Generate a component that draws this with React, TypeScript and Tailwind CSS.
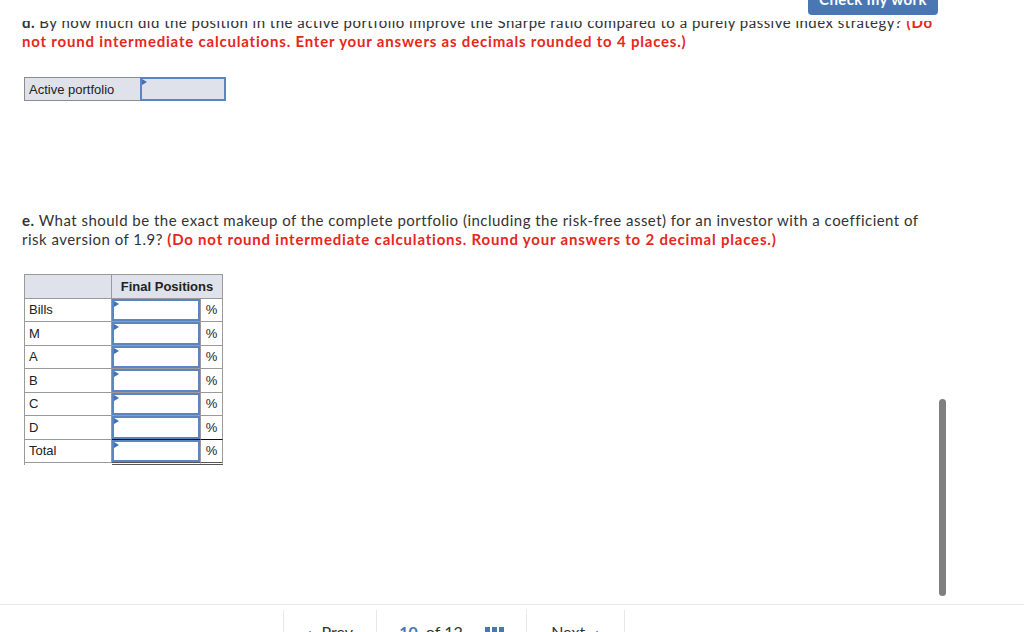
import React from 'react';

const rows = ['Bills', 'M', 'A', 'B', 'C', 'D', 'Total'];

function Flag() {
  return (
    <span className="absolute left-0 top-0 h-0 w-0 border-y-[3px] border-l-[5px] border-y-transparent border-l-[#3f72b5]" />
  );
}

export default function App() {
  return (
    <div className="relative flex h-[632px] w-[1024px] flex-col overflow-hidden bg-white font-['Lato',sans-serif] text-[#333]">
      {/* ── sticky top bar ── */}
      <div className="flex h-[21px] shrink-0 justify-end pr-[86px]">
        <button className="-mt-[17px] flex h-[32px] w-[130px] items-center justify-center rounded-b-[4px] bg-[#4a77b4] text-[15px] font-bold leading-none tracking-[0.4px] text-white">
          Check my work
        </button>
      </div>

      {/* ── question pane ── */}
      <div className="relative flex-1 overflow-hidden">
        <div className="-mt-[8px] pl-[22px] text-[15px] leading-[19px] tracking-[0.48px]">
          <p className="whitespace-nowrap">
            <b>d.</b> By how much did the position in the active portfolio improve the Sharpe ratio compared to a purely passive index strategy?{' '}
            <b className="tracking-[0.8px] text-[#e8261d]">(Do</b>
            <br />
            <b className="tracking-[0.8px] text-[#e8261d]">not round intermediate calculations. Enter your answers as decimals rounded to 4 places.)</b>
          </p>

          <div className="ml-[2px] mt-[26px] flex h-[24px] w-[202px] font-['Liberation_Sans',sans-serif] text-[13px] tracking-normal text-[#222]">
            <div className="flex w-[116px] items-center border border-r-0 border-[#8c8c8c] bg-[#dfe2ea] pl-[4px]">
              Active portfolio
            </div>
            <div className="relative flex-1 border-2 border-[#5a85c2] bg-[#dfe2ea]">
              <Flag />
            </div>
          </div>

          <p className="mt-[110px] whitespace-nowrap">
            <b>e.</b> What should be the exact makeup of the complete portfolio (including the risk-free asset) for an investor with a coefficient of
            <br />
            risk aversion of 1.9?{' '}
            <b className="tracking-[0.8px] text-[#e8261d]">(Do not round intermediate calculations. Round your answers to 2 decimal places.)</b>
          </p>

          <div className="ml-[2px] mt-[25px] w-[199px] border-l border-t border-[#9a9a9a] font-['Liberation_Sans',sans-serif] text-[13px] tracking-normal text-[#222]">
            <div className="flex h-[23.5px]">
              <div className="w-[87px] border-b border-r border-[#9a9a9a] bg-[#dfe2ea]" />
              <div className="flex w-[111px] items-center justify-center border-b border-r border-[#9a9a9a] bg-[#dfe2ea] font-bold">
                Final Positions
              </div>
            </div>
            {rows.map((r, i) => {
              const last = i === rows.length - 1;
              const beforeLast = i === rows.length - 2;
              const edge = last
                ? 'h-[25.5px] border-b-[3px] border-double border-b-[#555]'
                : beforeLast
                  ? 'h-[23.5px] border-b border-b-[#111]'
                  : 'h-[23.5px] border-b';
              return (
                <div key={r} className="flex">
                  <div className="flex h-[23.5px] w-[87px] items-center border-b border-r border-[#9a9a9a] pl-[4px]">{r}</div>
                  <div className={`w-[89px] border-r border-[#9a9a9a] ${edge}`}>
                    <div className="relative h-full border-2 border-[#5a85c2] bg-white">
                      <Flag />
                    </div>
                  </div>
                  <div className={`flex w-[22px] items-center justify-center border-r border-[#9a9a9a] ${edge}`}>%</div>
                </div>
              );
            })}
          </div>
        </div>

        {/* overlay scroll thumb */}
        <div className="absolute left-[939px] top-[378px] h-[197px] w-[7px] rounded-full bg-[#7f7f7f]" />
      </div>

      {/* ── bottom nav ── */}
      <div className="flex h-[28px] shrink-0 border-t border-[#e8e8e8] pl-[283px]">
        <div className="mt-[5px] flex w-[94px] justify-center gap-[10px] border-x border-[#e8e8e8] pt-[12px] text-[16px] leading-[20px]">
          <span className="font-bold text-[#4a77b4]">&lsaquo;</span>
          <span>Prev</span>
        </div>
        <div className="mt-[5px] flex w-[150px] items-start justify-center gap-[8px] border-r border-[#e8e8e8] pt-[12px] text-[16px] leading-[20px]">
          <span className="font-bold text-[#4a77b4]">10</span>
          <span>of 12</span>
          <span className="ml-[14px] mt-[5px] flex gap-[2px]">
            <span className="h-[12px] w-[5px] bg-[#4a77b4]" />
            <span className="h-[12px] w-[5px] bg-[#4a77b4]" />
            <span className="h-[12px] w-[5px] bg-[#4a77b4]" />
          </span>
        </div>
        <div className="mt-[5px] flex w-[98px] justify-center gap-[10px] border-r border-[#e8e8e8] pt-[12px] text-[16px] leading-[20px]">
          <span>Next</span>
          <span className="font-bold text-[#4a77b4]">&rsaquo;</span>
        </div>
      </div>
    </div>
  );
}
